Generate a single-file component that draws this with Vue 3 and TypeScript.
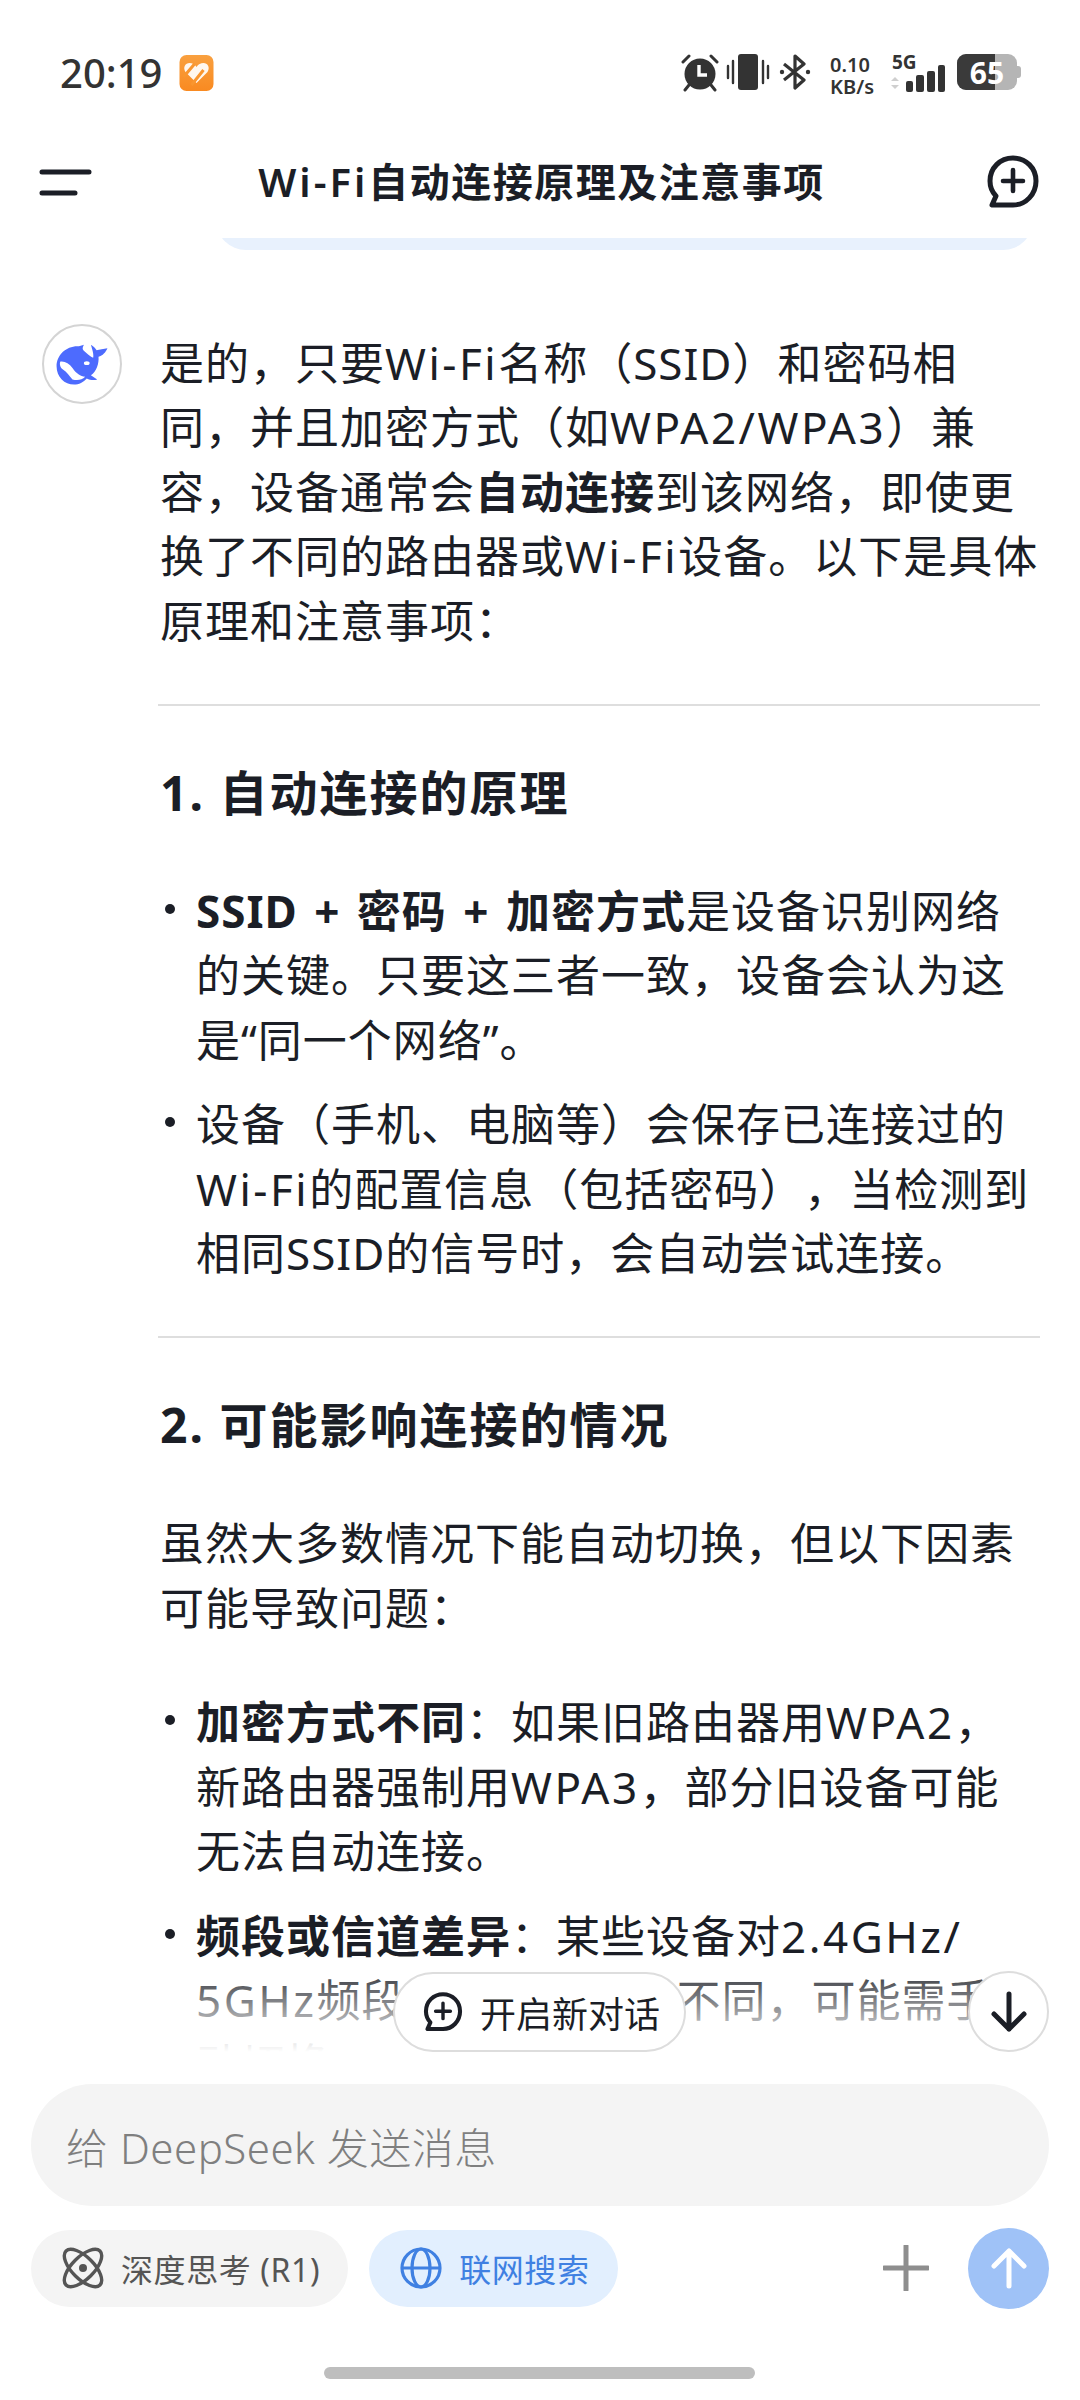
<template>
  <div class="screen">
    <div class="status-bar">
      <div class="status-left">
        <span class="time">20:19</span>
        <svg class="app-badge" width="35" height="36" viewBox="0 0 34 36">
          <defs>
            <linearGradient id="badge" x1="0" y1="0" x2="0" y2="1">
              <stop offset="0" stop-color="#f9a03f" />
              <stop offset="1" stop-color="#f98a21" />
            </linearGradient>
          </defs>
          <rect width="34" height="36" rx="7" fill="url(#badge)" />
          <path d="M17 28 L6 17 C3 12 6 8 10 8 C13 8 15 9 17 12 C19 9 21 8 24 8 C28 8 31 12 28 17Z" fill="#fff" opacity="0.92" />
          <path d="M4 22 L15 9 M12 30 L24 15" stroke="#f9962f" stroke-width="3" fill="none" />
        </svg>
      </div>
      <div class="status-right">
        <svg width="38" height="38" viewBox="0 0 38 38">
          <circle cx="19" cy="20" r="15.5" fill="#333" />
          <path d="M18 11 V21 H26" stroke="#fff" stroke-width="3.4" fill="none" />
          <path d="M2 8 L8 2 M30 2 L36 8 M8 31 L4 36 M30 31 L34 36" stroke="#333" stroke-width="3" stroke-linecap="round" />
        </svg>
        <svg class="vibrate" width="44" height="36" viewBox="0 0 44 36">
          <rect x="12" y="0" width="20" height="36" rx="3" fill="#333" />
          <path d="M2 12 V24 M7 7 V29 M37 7 V29 M42 12 V24" stroke="#333" stroke-width="2.4" stroke-linecap="round" />
        </svg>
        <svg class="bt" width="32" height="36" viewBox="0 0 32 36">
          <path d="M5 10 L25 26 L16 34 V2 L25 10 L5 26" stroke="#333" stroke-width="3.2" fill="none" stroke-linejoin="round" />
          <circle cx="3" cy="18" r="2.2" fill="#333" />
          <circle cx="29" cy="18" r="2.2" fill="#333" />
        </svg>
        <div class="speed">
          <span>0.10</span>
          <span>KB/s</span>
        </div>
        <svg class="signal" width="58" height="40" viewBox="0 0 58 40">
          <text x="2" y="16" class="five-g">5G</text>
          <path d="M5 24 L9 28 H1Z M5 36 L1 32 H9Z" fill="#cfcfcf" />
          <rect x="16" y="28" width="7" height="11" rx="2" fill="#333" />
          <rect x="26" y="22" width="8" height="17" rx="2" fill="#333" />
          <rect x="37" y="18" width="8" height="21" rx="2" fill="#333" />
          <rect x="48" y="12" width="7" height="27" rx="2" fill="#333" />
        </svg>
        <div class="battery">
          <div class="battery-fill"></div>
          <span class="battery-num">65</span>
        </div>
      </div>
    </div>

    <header class="top-bar">
      <svg width="53" height="27" viewBox="0 0 53 27">
        <path d="M3 3 H50 M3 24 H36" stroke="#1b1e26" stroke-width="5" stroke-linecap="round" />
      </svg>
      <div class="title"><span class="title-en">Wi-Fi</span>自动连接原理及注意事项</div>
      <svg width="54" height="54" viewBox="0 0 54 54">
        <path d="M27 3 C14 3 4 13 4 26 C4 32 6 37 10 41 L6 50 H27 C40 50 50 39 50 26 C50 13 40 3 27 3Z" fill="none" stroke="#1b1e26" stroke-width="5" stroke-linejoin="round" />
        <path d="M27 15 V36 M17 26 H37" stroke="#1b1e26" stroke-width="4.6" stroke-linecap="round" />
      </svg>
    </header>

    <main class="chat">
      <div class="user-bubble"></div>
      <div class="answer">
        <div class="avatar">
          <svg width="54" height="44" viewBox="105 130 170 135">
            <path d="M110 205 C110 170 140 142 175 142 C182 142 190 138 196 137 C192 145 190 150 195 155 C205 165 218 175 225 178 C228 170 222 150 218 137 C226 142 232 148 236 154 C245 152 258 150 270 148 C265 160 255 172 242 175 C244 195 236 222 218 233 C225 238 232 242 238 246 C228 250 215 248 205 243 C195 255 180 262 165 262 C135 262 110 238 110 205Z" fill="#4d6bfe" />
            <path d="M122 190 C135 188 150 195 160 210 C172 228 185 235 200 238 C190 248 175 250 160 246 C150 236 142 222 130 215 C122 210 118 198 122 190Z" fill="#fff" />
            <ellipse cx="205" cy="195" rx="9" ry="6" fill="#fff" />
          </svg>
        </div>
        <div class="answer-body">
          <p class="para">是的，只要<span class="en">Wi-Fi</span>名称（SSID）和密码相<br />同，并且加密方式（如<span class="en">WPA2/WPA3</span>）兼<br />容，设备通常会<b>自动连接</b>到该网络，即使更<br />换了不同的路由器或<span class="en">Wi-Fi</span>设备。以下是具体<br />原理和注意事项：</p>
          <div class="rule"></div>
          <h3 class="heading">1. 自动连接的原理</h3>
          <ul class="list first">
            <li><b>SSID + 密码 + 加密方式</b>是设备识别网络<br />的关键。只要这三者一致，设备会认为这<br />是“同一个网络”。</li>
            <li>设备（手机、电脑等）会保存已连接过的<br /><span class="en">Wi-Fi</span>的配置信息（包括密码），当检测到<br />相同SSID的信号时，会自动尝试连接。</li>
          </ul>
          <div class="rule"></div>
          <h3 class="heading">2. 可能影响连接的情况</h3>
          <p class="para lead">虽然大多数情况下能自动切换，但以下因素<br />可能导致问题：</p>
          <ul class="list">
            <li><b>加密方式不同</b>：如果旧路由器用<span class="en">WPA2</span>，<br />新路由器强制用<span class="en">WPA3</span>，部分旧设备可能<br />无法自动连接。</li>
            <li><b>频段或信道差异</b>：某些设备对<span class="en">2.4GHz/</span><br /><span class="en">5GHz</span>频段的支持优先级不同，可能需手<br />动切换。</li>
          </ul>
        </div>
      </div>
      <div class="fade"></div>
    </main>

    <button class="new-chat">
      <svg width="40" height="42" viewBox="0 0 54 54">
        <path d="M27 3 C14 3 4 13 4 26 C4 32 6 37 10 41 L6 50 H27 C40 50 50 39 50 26 C50 13 40 3 27 3Z" fill="none" stroke="#1b1e26" stroke-width="5.5" stroke-linejoin="round" />
        <path d="M27 15 V36 M17 26 H37" stroke="#1b1e26" stroke-width="4.6" stroke-linecap="round" />
      </svg>
      <span>开启新对话</span>
    </button>
    <button class="scroll-down">
      <svg width="36" height="42" viewBox="0 0 36 42">
        <path d="M18 3 V38 M3 23 L18 38 L33 23" stroke="#1b1e26" stroke-width="5" fill="none" stroke-linecap="round" stroke-linejoin="round" />
      </svg>
    </button>

    <footer class="composer">
      <div class="input">给 DeepSeek 发送消息</div>
      <div class="tools">
        <div class="chip">
          <svg width="42" height="42" viewBox="0 0 42 42">
            <g fill="none" stroke="#555" stroke-width="3.4">
              <ellipse cx="21" cy="21" rx="24" ry="11" transform="rotate(45 21 21)" />
              <ellipse cx="21" cy="21" rx="24" ry="11" transform="rotate(-45 21 21)" />
            </g>
            <circle cx="21" cy="21" r="4" fill="#555" />
          </svg>
          <span>深度思考 (R1)</span>
        </div>
        <div class="chip on">
          <svg width="42" height="42" viewBox="0 0 42 42">
            <g fill="none" stroke="#3f80e2" stroke-width="3.2">
              <circle cx="21" cy="21" r="19" />
              <ellipse cx="21" cy="21" rx="9" ry="19" />
              <path d="M2 21 H40" />
            </g>
          </svg>
          <span>联网搜索</span>
        </div>
        <svg class="plus" width="46" height="46" viewBox="0 0 46 46">
          <path d="M23 1 V45 M1 23 H45" stroke="#8e8e8e" stroke-width="5" stroke-linecap="round" />
        </svg>
        <div class="send">
          <svg width="36" height="42" viewBox="0 0 36 42">
            <path d="M18 39 V4 M3 19 L18 4 L33 19" stroke="#fff" stroke-width="5" fill="none" stroke-linecap="round" stroke-linejoin="round" />
          </svg>
        </div>
      </div>
      <div class="home-bar"></div>
    </footer>
  </div>
</template>

<script setup lang="ts"></script>

<style>
html,
body {
  margin: 0;
  background: #fff;
}
</style>

<style scoped>
.screen {
  position: relative;
  width: 1080px;
  height: 2400px;
  overflow: hidden;
  display: flex;
  flex-direction: column;
  background: #fff;
  color: #1b1e26;
  font-family: "Noto Sans", "Noto Sans CJK SC", sans-serif;
  text-spacing-trim: space-all;
}

.status-bar {
  height: 100px;
  flex: none;
  display: flex;
  justify-content: space-between;
  align-items: flex-start;
  padding: 54px 63px 0 60px;
  box-sizing: border-box;
}

.status-left {
  display: flex;
  align-items: center;
  gap: 17px;
}

.time {
  font-size: 40px;
  line-height: 38px;
  font-weight: 500;
  color: #333;
}

.status-right {
  display: flex;
  align-items: flex-start;
}

.vibrate {
  margin-left: 7px;
}

.bt {
  margin-left: 9px;
}

.speed {
  display: flex;
  flex-direction: column;
  margin-left: 19px;
  font-size: 20px;
  line-height: 22px;
  font-weight: 600;
  color: #333;
}

.signal {
  margin-left: 16px;
  margin-top: -1px;
}

.five-g {
  font-size: 19px;
  font-weight: 700;
  fill: #333;
}

.battery {
  position: relative;
  width: 60px;
  height: 36px;
  margin-left: 9px;
  border-radius: 9px;
  background: #b5b5b5;
  overflow: visible;
  display: flex;
  align-items: center;
  justify-content: center;
}

.battery::after {
  content: "";
  position: absolute;
  right: -4px;
  top: 12px;
  width: 4px;
  height: 12px;
  border-radius: 0 3px 3px 0;
  background: #b5b5b5;
}

.battery-fill {
  position: absolute;
  left: 0;
  top: 0;
  bottom: 0;
  width: 38px;
  background: #3a3a3a;
  border-radius: 9px 0 0 9px;
}

.battery-num {
  position: relative;
  font-size: 30px;
  font-weight: 700;
  color: #fff;
}

.top-bar {
  height: 138px;
  flex: none;
  box-sizing: border-box;
  display: flex;
  align-items: center;
  justify-content: space-between;
  padding: 26px 40px 0 39px;
}

.title {
  font-size: 40px;
  letter-spacing: 1.5px;
  font-weight: 600;
  line-height: 60px;
  margin-left: 5px;
}

.title-en {
  letter-spacing: 3px;
}

.chat {
  position: relative;
  height: 1814px;
  flex: none;
  overflow: hidden;
}

.user-bubble {
  width: 817px;
  height: 60px;
  margin: -48px 0 0 216px;
  border-radius: 40px;
  background: #e8f1fd;
}

.answer {
  display: flex;
  padding-top: 74px;
}

.avatar {
  flex: none;
  width: 80px;
  height: 80px;
  margin-left: 42px;
  box-sizing: border-box;
  border: 2.5px solid #d4d4d4;
  border-radius: 50%;
  display: flex;
  align-items: center;
  justify-content: center;
}

.answer-body {
  flex: 1;
  padding-top: 7px;
  margin-left: 38px;
  margin-right: 40px;
  font-size: 44px;
  letter-spacing: 1px;
  line-height: 64.4px;
  white-space: nowrap;
}

.en {
  letter-spacing: 2.5px;
}

.para {
  margin: 0;
}

.para.lead {
  margin-bottom: 50px;
}

b {
  font-weight: 700;
  word-spacing: 4px;
}

.rule {
  height: 2px;
  margin: 51px 0 55px -2px;
  background: #dedede;
}

.heading {
  margin: 0 0 54px;
  font-size: 48px;
  letter-spacing: 2px;
  line-height: 64px;
  font-weight: 700;
}

.list {
  list-style: none;
  margin: 0;
  padding: 0 0 0 36px;
}

.list li {
  position: relative;
  margin-bottom: 20px;
}

.list li:last-child {
  margin-bottom: 0;
}

.list li::before {
  content: "";
  position: absolute;
  left: -31px;
  top: 25px;
  width: 10px;
  height: 10px;
  border-radius: 50%;
  background: #1b1e26;
}

.fade {
  position: absolute;
  left: 0;
  right: 0;
  bottom: 0;
  height: 92px;
  background: linear-gradient(rgba(255, 255, 255, 0), #fff);
}

.new-chat {
  position: absolute;
  left: 393px;
  top: 1972px;
  width: 293px;
  height: 80px;
  box-sizing: border-box;
  padding: 0 0 0 28px;
  display: flex;
  align-items: center;
  gap: 17px;
  border: 2px solid #dddddd;
  border-radius: 40px;
  background: #fff;
  color: #1b1e26;
  font-family: inherit;
  font-size: 36px;
}

.scroll-down {
  position: absolute;
  left: 968px;
  top: 1971px;
  width: 81px;
  height: 81px;
  box-sizing: border-box;
  padding: 0;
  display: flex;
  align-items: center;
  justify-content: center;
  border: 2px solid #dddddd;
  border-radius: 50%;
  background: #fff;
}

.composer {
  flex: none;
  padding: 32px 31px 0;
  display: flex;
  flex-direction: column;
  align-items: stretch;
}

.input {
  height: 122px;
  box-sizing: border-box;
  padding-left: 35px;
  border-radius: 61px;
  background: #f4f4f4;
  display: flex;
  align-items: center;
  font-size: 42px;
  letter-spacing: 0.5px;
  font-weight: 300;
  color: #7f7f7f;
  white-space: pre;
}

.tools {
  display: flex;
  align-items: center;
  margin-top: 22px;
  height: 80px;
}

.chip {
  height: 77px;
  box-sizing: border-box;
  padding: 0 28px 0 31px;
  display: flex;
  align-items: center;
  gap: 17px;
  border-radius: 39px;
  background: #f4f4f4;
  color: #555;
  font-size: 32px;
  letter-spacing: 0.6px;
}

.chip.on {
  margin-left: 21px;
  background: #e2effe;
  color: #3f80e2;
}

.plus {
  margin-left: auto;
}

.send {
  width: 81px;
  height: 81px;
  margin-left: 39px;
  border-radius: 50%;
  background: #9fc2f7;
  display: flex;
  align-items: center;
  justify-content: center;
}

.home-bar {
  width: 431px;
  height: 12px;
  margin: 59px 0 0 293px;
  border-radius: 6px;
  background: #bebebe;
}
</style>
